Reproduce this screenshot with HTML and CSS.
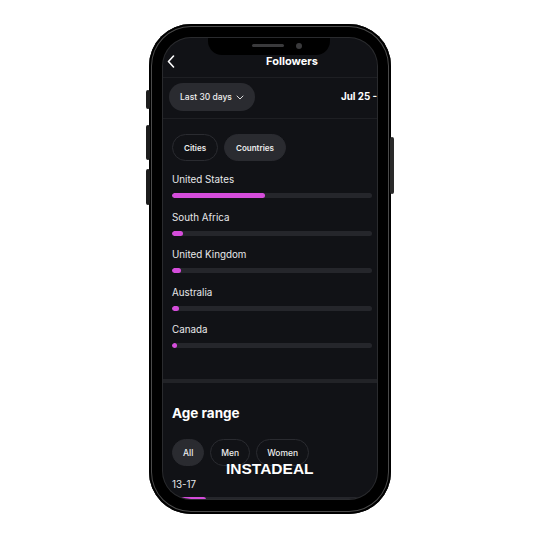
FILE: index.html
```html
<!DOCTYPE html>
<html>
<head>
<meta charset="utf-8">
<link rel="stylesheet" href="styles.css">
</head>
<body>
<div class="stage">
  <div class="phone">
    <span class="btn btn-l1"></span>
    <span class="btn btn-l2"></span>
    <span class="btn btn-l3"></span>
    <span class="btn btn-r"></span>
    <div class="screen">
      <div class="notch"><span class="speaker"></span><span class="cam"></span></div>
      <div class="app">
        <div class="header">
          <svg class="back" width="8" height="13" viewBox="0 0 8 13"><path d="M6.5 1 L1.5 6.5 L6.5 12" fill="none" stroke="#fff" stroke-width="1.6" stroke-linecap="round" stroke-linejoin="round"/></svg>
          <div class="title">Followers</div>
        </div>
        <div class="filters">
          <div class="pill">Last 30 days
            <svg width="8" height="5" viewBox="0 0 8 5"><path d="M1 1 L4 4 L7 1" fill="none" stroke="#ddd" stroke-width="1" stroke-linecap="round" stroke-linejoin="round"/></svg>
          </div>
          <div class="date">Jul 25 -</div>
        </div>
        <div class="section">
          <div class="chips">
            <span class="chip">Cities</span>
            <span class="chip on">Countries</span>
          </div>
          <div class="rows">
            <div class="row"><div class="label">United States</div><div class="track"><div class="fill" style="width:93px"></div></div></div>
            <div class="row"><div class="label">South Africa</div><div class="track"><div class="fill" style="width:11px"></div></div></div>
            <div class="row"><div class="label">United Kingdom</div><div class="track"><div class="fill" style="width:9px"></div></div></div>
            <div class="row"><div class="label">Australia</div><div class="track"><div class="fill" style="width:7px"></div></div></div>
            <div class="row"><div class="label">Canada</div><div class="track"><div class="fill" style="width:5px"></div></div></div>
          </div>
        </div>
        <div class="thick"></div>
        <div class="section age">
          <div class="h2">Age range</div>
          <div class="chips">
            <span class="chip on">All</span>
            <span class="chip">Men</span>
            <span class="chip">Women</span>
          </div>
          <div class="row"><div class="label">13-17</div><div class="track"><div class="fill" style="width:34px"></div></div></div>
        </div>
      </div>
    </div>
  </div>
  <div class="mark">INSTADEAL</div>
</div>
</body>
</html>
```
FILE: styles.css
```css
* { box-sizing: border-box; }
html, body { margin: 0; padding: 0; background: #fff; }
body { width: 540px; height: 540px; overflow: hidden; font-family: Inter, "Noto Sans", sans-serif; }
.stage { position: relative; width: 540px; height: 540px; padding: 24px 0 0 149px; }
.phone {
  position: relative;
  width: 242px; height: 490px;
  background: #000;
  border-radius: 42px;
  padding: 14px 14px 15px 14px;
  box-shadow: inset 0 0 0 2px #000, inset 0 0 0 3px #4a4a4a;
}
.btn { position: absolute; background: #1c1c1c; border-radius: 2px; width: 4px; }
.btn-l1 { left: -3px; top: 66px; height: 19px; }
.btn-l2 { left: -3px; top: 101px; height: 35px; }
.btn-l3 { left: -3px; top: 145px; height: 36px; }
.btn-r { right: -3px; top: 113px; height: 57px; background: #2a2a2a; }
.screen {
  position: relative;
  width: 214px; height: 461px;
  border-radius: 28px;
  overflow: hidden;
  background: #111216;
  box-shadow: 0 0 0 1px #2a2b2e;
}
.notch {
  position: absolute; top: 0; left: 45px;
  width: 122px; height: 17px;
  background: #000;
  border-radius: 0 0 14px 14px;
  z-index: 2;
}
.speaker { position: absolute; left: 44px; top: 6px; width: 32px; height: 3px; border-radius: 2px; background: #3a3a3c; }
.cam { position: absolute; left: 88px; top: 5px; width: 6px; height: 6px; border-radius: 50%; background: #3a3a3c; }
.app { width: 258px; color: #fff; }
.header {
  position: relative;
  height: 40px;
  border-bottom: 1px solid #1e1f23;
  display: flex; align-items: flex-start; justify-content: center;
  padding-top: 16px;
}
.back { position: absolute; left: 4px; top: 17px; }
.title { font-size: 11px; font-weight: 700; line-height: 14px; }
.filters {
  height: 41px;
  border-bottom: 1px solid #1e1f23;
  display: flex; align-items: flex-start; gap: 86px;
  padding: 5px 0 0 6px;
}
.pill {
  width: 86px; height: 28px; border-radius: 14px;
  background: #2a2b30;
  display: flex; align-items: center; justify-content: center; gap: 4px;
  font-size: 8.5px; font-weight: 500; color: #eee;
}
.date { font-size: 9.8px; font-weight: 700; line-height: 28px; white-space: nowrap; }
.section { padding: 15px 0 0 9px; }
.chips { display: flex; gap: 6px; }
.chip {
  height: 27px; border-radius: 14px;
  border: 1px solid #2a2b30;
  padding: 0 11px;
  display: flex; align-items: center;
  font-size: 8px; font-weight: 600; color: #eee;
}
.chip.on { background: #2a2b30; }
.age .chip { padding: 0 10px; font-size: 8.5px; font-weight: 500; }
.rows { display: flex; flex-direction: column; gap: 12.5px; margin-top: 12px; }
.row { display: flex; flex-direction: column; gap: 6px; }
.label { font-size: 9.8px; line-height: 14px; color: #e8e8ea; }
.track { width: 200px; height: 5px; border-radius: 3px; background: #25262b; overflow: hidden; }
.fill { height: 100%; background: #d54ddb; border-radius: 3px; }
.thick { height: 4px; background: #222327; margin-top: 31px; }
.age { padding-top: 20px; }
.h2 { font-size: 13.5px; font-weight: 700; line-height: 20px; margin-bottom: 16px; }
.age .row { margin-top: 12px; gap: 5px; }
.mark {
  position: absolute; left: 226px; top: 460px;
  font-family: "Liberation Sans", Arial, sans-serif;
  font-weight: 700; font-size: 15.5px; color: #fff;
}
```
